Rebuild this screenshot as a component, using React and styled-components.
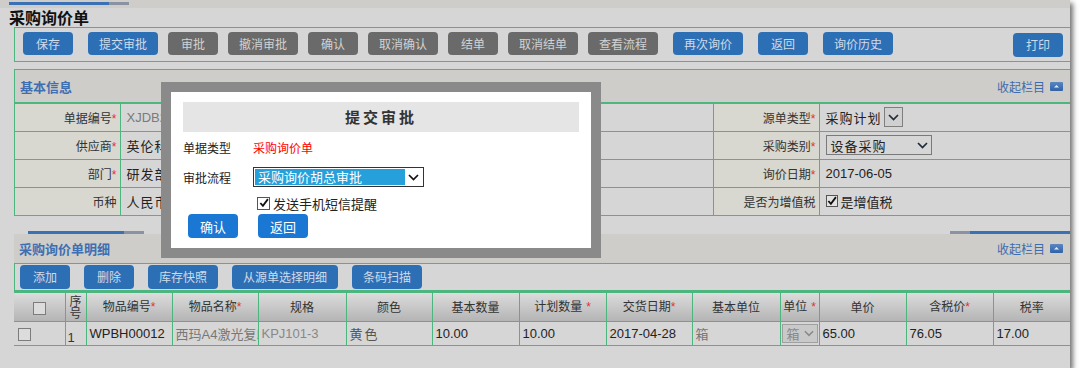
import React from 'react';
import styled, { createGlobalStyle } from 'styled-components';

const GREEN = '#4db57e';
const HEAD_BG = '#cecdc9';
const PAGE_BG = '#d6d6d6';

const Global = createGlobalStyle`
  html, body { margin: 0; padding: 0; background: #fff; }
  body {
    font-family: "Liberation Sans", "Noto Sans CJK SC", sans-serif;
    font-size: 12px;
    color: #333;
  }
  * { box-sizing: border-box; }
`;

const Window = styled.div`
  position: relative;
  width: 1070px;
  height: 368px;
  background: ${PAGE_BG};
  box-shadow: 3px 3px 5px rgba(0, 0, 0, 0.55);
  overflow: hidden;
`;

const TopStrip = styled.div`
  height: 8px;
  background: ${HEAD_BG};
  padding: 2px 0 0 9px;
`;

const TabBar = styled.div`
  display: flex;
  height: 3px;
`;

const TabSeg = styled.div`
  width: ${(p) => p.$w}px;
  background: ${(p) => (p.$blue ? '#3a70b4' : '#8a93a3')};
`;

const PageTitle = styled.h1`
  margin: 0;
  height: 19px;
  padding-left: 9px;
  font-family: "Noto Sans CJK SC", sans-serif;
  font-size: 16px;
  line-height: 19px;
  font-weight: bold;
  color: #111;
`;

const Toolbar = styled.div`
  margin-left: 14px;
  height: ${(p) => p.$h}px;
  border: 1px solid ${GREEN};
  border-right: none;
  display: flex;
  align-items: flex-start;
  gap: ${(p) => p.$gap}px;
  padding: ${(p) => p.$pad};
`;

const Btn = styled.button`
  flex: none;
  width: ${(p) => p.$w}px;
  height: ${(p) => p.$h || 23}px;
  margin-left: ${(p) => p.$ml || 0}px;
  margin-top: ${(p) => p.$mt || 0}px;
  border: none;
  border-radius: 4px;
  padding: 0;
  background: ${(p) => (p.$grey ? '#6a6a6a' : '#2d6fb5')};
  color: ${(p) => (p.$grey ? '#d2d2d2' : '#d0dbea')};
  font-family: "Noto Sans CJK SC", sans-serif;
  font-size: 12px;
  line-height: ${(p) => p.$h || 23}px;
  cursor: pointer;
`;

const PrintBtn = styled(Btn)`
  margin-left: auto;
`;

const Section = styled.section`
  margin-top: ${(p) => p.$mt}px;
  margin-left: 14px;
  border-left: ${(p) => (p.$bordered ? `1px solid ${GREEN}` : 'none')};
  border-top: ${(p) => (p.$bordered ? `1px solid ${GREEN}` : 'none')};
`;

const SectionHead = styled.div`
  height: ${(p) => p.$h}px;
  background: ${HEAD_BG};
  display: flex;
  align-items: center;
  justify-content: space-between;
  padding: 0 7px 0 5px;
`;

const SectionTitle = styled.span`
  font-family: "Noto Sans CJK SC", sans-serif;
  font-size: 13px;
  font-weight: bold;
  color: #3d6fb2;
`;

const Collapse = styled.span`
  display: flex;
  align-items: center;
  gap: 5px;
  font-family: "Noto Sans CJK SC", sans-serif;
  font-size: 12px;
  color: #3d6cb0;
`;

const TabRow = styled.div`
  margin-left: 14px;
  display: flex;
  justify-content: space-between;
`;

const InfoTable = styled.table`
  width: 1056px;
  border-collapse: collapse;
  table-layout: fixed;
  border-top: 2px solid ${GREEN};
`;

const LabelCell = styled.td`
  height: 28px;
  padding: 0 3px 0 0;
  border: 1px solid ${GREEN};
  border-left: ${(p) => (p.$first ? 'none' : `1px solid ${GREEN}`)};
  background: #d8d7d0;
  text-align: right;
  font-family: "Noto Sans CJK SC", sans-serif;
  font-size: 12px;
  color: #333;
  white-space: nowrap;
`;

const ValueCell = styled.td`
  height: 28px;
  padding: 0 0 0 6px;
  border: 1px solid ${GREEN};
  border-right: none;
  font-size: 13px;
  color: ${(p) => (p.$muted ? '#7a7a7a' : '#222')};
  white-space: nowrap;
  overflow: hidden;
  letter-spacing: ${(p) => (p.$spaced ? '1px' : '0')};
`;

const Req = styled.span`
  color: #e0303a;
  font-family: "Liberation Sans", sans-serif;
  font-size: 12px;
  margin-left: ${(p) => (p.$gap ? 4 : 0)}px;
`;

const InlineSelect = styled.span`
  display: inline-flex;
  align-items: center;
  gap: 2px;
  font-size: 13px;
  color: #222;
  letter-spacing: 1px;
`;

const ArrowBox = styled.span`
  display: inline-flex;
  align-items: center;
  justify-content: center;
  width: 19px;
  height: 20px;
  border: 1px solid #7f7f7f;
  background: #d0d0d0;
`;

const BoxSelect = styled.span`
  display: inline-flex;
  align-items: center;
  justify-content: space-between;
  width: ${(p) => p.$w}px;
  height: ${(p) => p.$h}px;
  padding: 0 3px 0 4px;
  border: 1px solid ${(p) => p.$border};
  background: ${(p) => p.$bg || 'transparent'};
  color: ${(p) => p.$color || '#222'};
  font-size: 13px;
  letter-spacing: 1px;
`;

const CheckBox = styled.span`
  display: inline-flex;
  align-items: center;
  justify-content: center;
  flex: none;
  width: ${(p) => p.$s || 12}px;
  height: ${(p) => p.$s || 12}px;
  border: 1px solid ${(p) => (p.$checked ? '#555' : '#7c7c7c')};
  background: ${(p) => (p.$bg ? p.$bg : '#dcdcdc')};
`;

const CheckLine = styled.span`
  display: inline-flex;
  align-items: center;
  gap: 3px;
  font-family: "Noto Sans CJK SC", sans-serif;
  font-size: 13px;
  color: #222;
`;

const DetailTable = styled.table`
  width: 1056px;
  border-collapse: collapse;
  table-layout: fixed;
  border-top: 2px solid ${GREEN};
`;

const Th = styled.th`
  height: 30px;
  padding: 0;
  border: 1px solid ${GREEN};
  border-left: ${(p) => (p.$first ? 'none' : `1px solid ${GREEN}`)};
  border-right: ${(p) => (p.$last ? 'none' : `1px solid ${GREEN}`)};
  background: linear-gradient(#dcdcdc, #b4b4b4);
  font-family: "Noto Sans CJK SC", sans-serif;
  font-weight: normal;
  font-size: 12px;
  line-height: ${(p) => (p.$tight ? '12px' : '16px')};
  color: #333;
  text-align: center;
  white-space: ${(p) => (p.$tight ? 'normal' : 'nowrap')};
  overflow: hidden;
`;

const Td = styled.td`
  height: 24px;
  padding: 0 0 0 ${(p) => (p.$pl === undefined ? 3 : p.$pl)}px;
  border: 1px solid ${GREEN};
  border-left: ${(p) => (p.$first ? 'none' : `1px solid ${GREEN}`)};
  border-right: ${(p) => (p.$last ? 'none' : `1px solid ${GREEN}`)};
  font-size: 13px;
  color: ${(p) => p.$color || '#222'};
  white-space: nowrap;
  overflow: hidden;
  vertical-align: ${(p) => p.$valign || 'middle'};
  letter-spacing: ${(p) => (p.$spaced ? '2px' : '0')};
`;

/* ---------- modal ---------- */
const Modal = styled.div`
  position: absolute;
  left: 161px;
  top: 82px;
  width: 440px;
  height: 176px;
  border: 10px solid #8a8a8a;
  background: #fff;
  padding: 10px 12px 0 12px;
`;

const ModalTitle = styled.div`
  height: 30px;
  background: #e5e5e5;
  text-align: center;
  font-family: "Noto Sans CJK SC", sans-serif;
  font-size: 15px;
  font-weight: bold;
  line-height: 30px;
  letter-spacing: 3px;
  color: #333;
`;

const FieldRow = styled.div`
  display: flex;
  align-items: center;
  height: ${(p) => p.$h}px;
  padding-left: ${(p) => p.$pl || 0}px;
`;

const FieldLabel = styled.span`
  width: 70px;
  font-family: "Noto Sans CJK SC", sans-serif;
  font-size: 12px;
  color: #222;
`;

const RedText = styled.span`
  font-family: "Noto Sans CJK SC", sans-serif;
  font-size: 12px;
  color: #f00;
`;

const FlowSelect = styled.div`
  display: flex;
  align-items: center;
  width: 171px;
  height: 20px;
  border: 1px solid #333;
  padding: 1px;
  background: #fff;
`;

const FlowSelected = styled.span`
  width: 150px;
  height: 16px;
  background: #26a0da;
  color: #fff;
  font-family: "Noto Sans CJK SC", sans-serif;
  font-size: 13px;
  line-height: 16px;
  padding-left: 3px;
`;

const FlowArrow = styled.span`
  flex: 1;
  display: flex;
  justify-content: center;
`;

const ModalActions = styled.div`
  display: flex;
  gap: 20px;
  padding-left: 5px;
`;

const ModalBtn = styled.button`
  width: 50px;
  height: 24px;
  border: none;
  border-radius: 4px;
  padding: 0;
  background: #1a77d4;
  color: #fff;
  font-family: "Noto Sans CJK SC", sans-serif;
  font-size: 13px;
  cursor: pointer;
`;

/* ---------- icons ---------- */
const Chevron = ({ color = '#222', w = 11, h = 7 }) => (
  <svg width={w} height={h} viewBox="0 0 11 7">
    <path d="M1 1 L5.5 5.5 L10 1" fill="none" stroke={color} strokeWidth="1.7" />
  </svg>
);

const Tick = ({ size = 11 }) => (
  <svg width={size} height={size} viewBox="0 0 11 11">
    <path d="M1.5 5.5 L4.3 8.6 L9.8 1.2" fill="none" stroke="#111" strokeWidth="2" />
  </svg>
);

const CollapseIcon = () => (
  <svg width="13" height="9" viewBox="0 0 13 9">
    <defs>
      <linearGradient id="cg" x1="0" y1="0" x2="0" y2="1">
        <stop offset="0" stopColor="#5b87c2" />
        <stop offset="1" stopColor="#2f62a6" />
      </linearGradient>
    </defs>
    <rect x="0" y="0" width="13" height="9" rx="1" fill="url(#cg)" />
    <path d="M4 5.5 L6.5 3 L9 5.5 Z" fill="#e4ebf4" />
  </svg>
);

const topButtons = [
  { t: '保存', w: 50 },
  { t: '提交审批', w: 70 },
  { t: '审批', w: 50, grey: true },
  { t: '撤消审批', w: 70, grey: true },
  { t: '确认', w: 50, grey: true },
  { t: '取消确认', w: 70, grey: true },
  { t: '结单', w: 50, grey: true },
  { t: '取消结单', w: 70, grey: true },
  { t: '查看流程', w: 70, grey: true },
  { t: '再次询价', w: 70 },
  { t: '返回', w: 50 },
  { t: '询价历史', w: 70 },
];

const detailButtons = [
  { t: '添加', w: 50 },
  { t: '删除', w: 50 },
  { t: '库存快照', w: 70 },
  { t: '从源单选择明细', w: 106 },
  { t: '条码扫描', w: 70 },
];

const detailCols = [51, 21, 86, 86, 88, 86, 87, 87, 86, 88, 39, 87, 87, 77];

const L = ({ children, req, first }) => (
  <LabelCell $first={first}>
    {children}
    {req && <Req>*</Req>}
  </LabelCell>
);

export default function App() {
  return (
    <>
      <Global />
      <Window>
        <TopStrip>
          <TabBar>
            <TabSeg $w={100} $blue />
            <TabSeg $w={20} />
          </TabBar>
        </TopStrip>
        <PageTitle>采购询价单</PageTitle>

        <Toolbar $h={35} $gap={10} $pad="4px 7px 0 3px">
          {topButtons.map((b) => (
            <Btn key={b.t} $w={b.w} $grey={b.grey} $ml={b.grey ? 0 : 5}>
              {b.t}
            </Btn>
          ))}
          <PrintBtn $w={50} $h={24} $mt={1}>
            打印
          </PrintBtn>
        </Toolbar>

        <Section $mt={7} $bordered>
          <SectionHead $h={32}>
            <SectionTitle>基本信息</SectionTitle>
            <Collapse>
              收起栏目
              <CollapseIcon />
            </Collapse>
          </SectionHead>
          <InfoTable>
            <colgroup>
              <col style={{ width: 105 }} />
              <col style={{ width: 245 }} />
              <col style={{ width: 106 }} />
              <col style={{ width: 242 }} />
              <col style={{ width: 106 }} />
              <col style={{ width: 252 }} />
            </colgroup>
            <tbody>
              <tr>
                <L req first>单据编号</L>
                <ValueCell $muted>XJDB2017060500001</ValueCell>
                <L req>询价主题</L>
                <ValueCell />
                <L req>源单类型</L>
                <ValueCell>
                  <InlineSelect>
                    采购计划
                    <ArrowBox>
                      <Chevron color="#1f2a3a" />
                    </ArrowBox>
                  </InlineSelect>
                </ValueCell>
              </tr>
              <tr>
                <L req first>供应商</L>
                <ValueCell $spaced>英伦科技有限公司</ValueCell>
                <L>联系人</L>
                <ValueCell />
                <L req>采购类别</L>
                <ValueCell>
                  <BoxSelect $w={106} $h={20} $border="#7a7a7a">
                    设备采购
                    <Chevron color="#1f2a3a" />
                  </BoxSelect>
                </ValueCell>
              </tr>
              <tr>
                <L req first>部门</L>
                <ValueCell $spaced>研发部</ValueCell>
                <L req>采购员</L>
                <ValueCell />
                <L req>询价日期</L>
                <ValueCell>2017-06-05</ValueCell>
              </tr>
              <tr>
                <L first>币种</L>
                <ValueCell $spaced>人民币</ValueCell>
                <L>汇率</L>
                <ValueCell />
                <L>是否为增值税</L>
                <ValueCell>
                  <CheckLine>
                    <CheckBox $checked $bg="#e2e2e2">
                      <Tick size={10} />
                    </CheckBox>
                    是增值税
                  </CheckLine>
                </ValueCell>
              </tr>
            </tbody>
          </InfoTable>
        </Section>

        <Section $mt={15}>
          <TabRow>
            <TabBar>
              <TabSeg $w={96} $blue />
              <TabSeg $w={20} />
            </TabBar>
            <TabBar>
              <TabSeg $w={20} />
              <TabSeg $w={100} $blue />
            </TabBar>
          </TabRow>
        </Section>
        <Section $mt={0}>
          <SectionHead $h={29}>
            <SectionTitle>采购询价单明细</SectionTitle>
            <Collapse>
              收起栏目
              <CollapseIcon />
            </Collapse>
          </SectionHead>
        </Section>

        <Toolbar $h={28} $gap={14} $pad="1px 0 0 5px">
          {detailButtons.map((b) => (
            <Btn key={b.t} $w={b.w} $h={24}>
              {b.t}
            </Btn>
          ))}
        </Toolbar>

        <Section $mt={0}>
          <DetailTable>
            <colgroup>
              {detailCols.map((w, i) => (
                <col key={i} style={{ width: w }} />
              ))}
            </colgroup>
            <thead>
              <tr>
                <Th $first>
                  <CheckBox $s={13} style={{ verticalAlign: 'middle' }} />
                </Th>
                <Th $tight>序号</Th>
                <Th>
                  物品编号<Req>*</Req>
                </Th>
                <Th>
                  物品名称<Req>*</Req>
                </Th>
                <Th>规格</Th>
                <Th>颜色</Th>
                <Th>基本数量</Th>
                <Th>
                  计划数量<Req $gap>*</Req>
                </Th>
                <Th>
                  交货日期<Req>*</Req>
                </Th>
                <Th>基本单位</Th>
                <Th>
                  单位<Req $gap>*</Req>
                </Th>
                <Th>单价</Th>
                <Th>
                  含税价<Req>*</Req>
                </Th>
                <Th $last>税率</Th>
              </tr>
            </thead>
            <tbody>
              <tr>
                <Td $first $pl={4}>
                  <CheckBox $s={13} style={{ verticalAlign: 'middle' }} />
                </Td>
                <Td $pl={2} $valign="bottom" $color="#333">
                  1
                </Td>
                <Td>WPBH00012</Td>
                <Td $color="#777">西玛A4激光复印纸</Td>
                <Td $color="#888">KPJ101-3</Td>
                <Td $color="#555" $spaced>
                  黄色
                </Td>
                <Td>10.00</Td>
                <Td>10.00</Td>
                <Td>2017-04-28</Td>
                <Td $color="#777">箱</Td>
                <Td $pl={1}>
                  <BoxSelect $w={36} $h={19} $border="#a0a0a0" $bg="#c9c9c9" $color="#888">
                    箱
                    <Chevron color="#8a8a8a" w={10} />
                  </BoxSelect>
                </Td>
                <Td>65.00</Td>
                <Td>76.05</Td>
                <Td $last>17.00</Td>
              </tr>
            </tbody>
          </DetailTable>
        </Section>

        <Modal>
          <ModalTitle>提交审批</ModalTitle>
          <FieldRow $h={30}>
            <FieldLabel>单据类型</FieldLabel>
            <RedText>采购询价单</RedText>
          </FieldRow>
          <FieldRow $h={30}>
            <FieldLabel>审批流程</FieldLabel>
            <FlowSelect>
              <FlowSelected>采购询价胡总审批</FlowSelected>
              <FlowArrow>
                <Chevron color="#111" />
              </FlowArrow>
            </FlowSelect>
          </FieldRow>
          <FieldRow $h={22} $pl={74}>
            <CheckLine>
              <CheckBox $s={13} $checked $bg="#fff">
                <Tick size={10} />
              </CheckBox>
              发送手机短信提醒
            </CheckLine>
          </FieldRow>
          <ModalActions>
            <ModalBtn>确认</ModalBtn>
            <ModalBtn>返回</ModalBtn>
          </ModalActions>
        </Modal>
      </Window>
    </>
  );
}
